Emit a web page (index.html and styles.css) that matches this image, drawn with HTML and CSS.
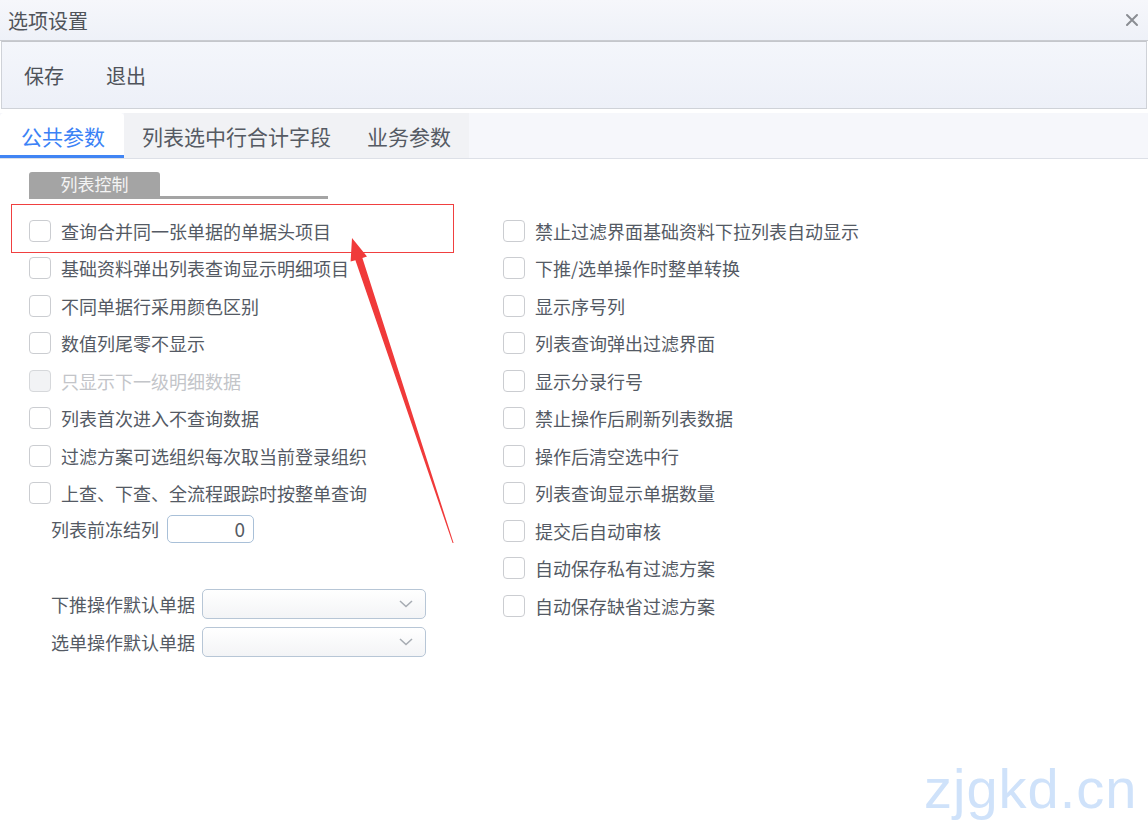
FILE: index.html
```html
<!DOCTYPE html>
<html lang="zh-CN">
<head>
  <meta charset="UTF-8">
  <title>选项设置</title>
  <link rel="stylesheet" href="styles.css">
</head>
<body>

  <div class="titlebar">
    <span class="title">选项设置</span>
    <svg class="close" width="14" height="14" viewBox="0 0 14 14">
      <path d="M2 2 L12 12 M12 2 L2 12" stroke="#8a8d93" stroke-width="2" stroke-linecap="round"/>
    </svg>
  </div>

  <div class="toolbar">
    <span class="tool-btn">保存</span>
    <span class="tool-btn">退出</span>
  </div>

  <div class="tabs">
    <div class="tab active">公共参数</div>
    <div class="tab">列表选中行合计字段</div>
    <div class="tab">业务参数</div>
  </div>

  <div class="panel">
    <div class="group-head"><span class="group-title">列表控制</span></div>

    <div class="columns">
      <div class="col col-left">
        <label class="row"><span class="box"></span>查询合并同一张单据的单据头项目</label>
        <label class="row"><span class="box"></span>基础资料弹出列表查询显示明细项目</label>
        <label class="row"><span class="box"></span>不同单据行采用颜色区别</label>
        <label class="row"><span class="box"></span>数值列尾零不显示</label>
        <label class="row disabled"><span class="box"></span>只显示下一级明细数据</label>
        <label class="row"><span class="box"></span>列表首次进入不查询数据</label>
        <label class="row"><span class="box"></span>过滤方案可选组织每次取当前登录组织</label>
        <label class="row"><span class="box"></span>上查、下查、全流程跟踪时按整单查询</label>

        <div class="field field-num">
          <span class="field-label">列表前冻结列</span>
          <span class="num-input">0</span>
        </div>

        <div class="field field-select">
          <span class="field-label">下推操作默认单据</span>
          <span class="select"><svg width="14" height="8" viewBox="0 0 14 8"><path d="M1 1 L7 6.5 L13 1" fill="none" stroke="#a7acb3" stroke-width="1.6"/></svg></span>
        </div>
        <div class="field field-select">
          <span class="field-label">选单操作默认单据</span>
          <span class="select"><svg width="14" height="8" viewBox="0 0 14 8"><path d="M1 1 L7 6.5 L13 1" fill="none" stroke="#a7acb3" stroke-width="1.6"/></svg></span>
        </div>
      </div>

      <div class="col col-right">
        <label class="row"><span class="box"></span>禁止过滤界面基础资料下拉列表自动显示</label>
        <label class="row"><span class="box"></span>下推/选单操作时整单转换</label>
        <label class="row"><span class="box"></span>显示序号列</label>
        <label class="row"><span class="box"></span>列表查询弹出过滤界面</label>
        <label class="row"><span class="box"></span>显示分录行号</label>
        <label class="row"><span class="box"></span>禁止操作后刷新列表数据</label>
        <label class="row"><span class="box"></span>操作后清空选中行</label>
        <label class="row"><span class="box"></span>列表查询显示单据数量</label>
        <label class="row"><span class="box"></span>提交后自动审核</label>
        <label class="row"><span class="box"></span>自动保存私有过滤方案</label>
        <label class="row"><span class="box"></span>自动保存缺省过滤方案</label>
      </div>
    </div>
  </div>

  <!-- 标注：红框和箭头 -->
  <div class="mark-box"></div>
  <svg class="mark-arrow" width="1148" height="827" viewBox="0 0 1148 827">
    <polygon points="352,238 367,256.5 362.4,258 453.6,543 452.6,543 355.4,260.2 350.6,261.6" fill="#f03a3a"/>
  </svg>

  <div class="watermark">zjgkd.cn</div>

</body>
</html>
```

FILE: styles.css
```css
body {
  margin: 0;
  font-family: "Noto Sans CJK SC", "Microsoft YaHei", sans-serif;
  color: #545a64;
  background-color: #ffffff;
  width: 1148px;
  height: 827px;
  overflow: hidden;
  position: relative;
}
.titlebar {
  height: 40px;
  padding: 0 9px 0 8px;
  display: flex;
  align-items: center;
  justify-content: space-between;
  background: linear-gradient(#f6f7fb, #eef1f8);
  border-bottom: 1px solid #c9cbd0;
}
.title {
  font-size: 20px;
  color: #50545a;
}
.toolbar {
  margin: 0 1px 0 1px;
  height: 66px;
  display: flex;
  align-items: center;
  gap: 42px;
  padding-left: 22px;
  background: linear-gradient(#f4f6fb, #edf0f8);
  border: 1px solid #cfd2d8;
  border-top-color: #c4c6cb;
}
.tool-btn {
  font-size: 20px;
  color: #4f535a;
}
.tabs {
  margin-top: 4px;
  height: 45px;
  display: flex;
  background-color: #f6f7fb;
  border-bottom: 1px solid #dde0e7;
}
.tab {
  padding: 0 18px;
  font-size: 21px;
  line-height: 46px;
  color: #555a63;
  background-color: #f1f2f5;
}
.tab.active {
  padding: 0 19px 0 21px;
  color: #3b82f6;
  background-color: #ffffff;
  border-radius: 4px 4px 0 0;
  box-shadow: inset 0 -3px 0 #4185f4;
}
.panel {
  padding: 13px 0 0 29px;
}
.group-head {
  width: 299px;
  border-bottom: 3px solid #a4a4a4;
  height: 24px;
}
.group-title {
  display: inline-block;
  width: 131px;
  height: 24px;
  line-height: 24px;
  text-align: center;
  font-size: 17px;
  color: #f4f4f4;
  background-color: #a4a4a4;
  border-radius: 3px 3px 0 0;
}
.columns {
  display: grid;
  grid-template-columns: 474px 1fr;
  margin-top: 13px;
}
.row {
  height: 37.5px;
  display: flex;
  align-items: center;
  font-size: 18px;
  color: #545a64;
}
.box {
  width: 20px;
  height: 20px;
  border: 1px solid #cbcdd1;
  border-radius: 4px;
  background-color: #ffffff;
  margin-right: 10px;
}
.row.disabled {
  color: #c3c5c9;
}
.row.disabled .box {
  background-color: #f2f3f5;
  border-color: #d6d8db;
}
.field {
  display: flex;
  align-items: center;
  padding-left: 22px;
  font-size: 18px;
  color: #545a64;
}
.field-label {
  margin-right: 8px;
}
.field-num {
  margin-top: 2px;
  height: 30px;
}
.num-input {
  width: 77px;
  height: 26px;
  line-height: 26px;
  border: 1px solid #a9c0d8;
  border-radius: 5px;
  text-align: right;
  padding-right: 8px;
  font-size: 19px;
  color: #555a63;
}
.field-select {
  height: 38px;
}
.field-num + .field-select {
  margin-top: 41px;
}
.field-select .field-label {
  margin-right: 7px;
}
.select {
  width: 224px;
  height: 30px;
  border: 1px solid #b7c6d6;
  border-radius: 5px;
  background: linear-gradient(#ffffff, #f3f4f6);
  display: flex;
  align-items: center;
  justify-content: flex-end;
  padding-right: 12px;
  box-sizing: border-box;
}
.mark-box {
  position: absolute;
  left: 11px;
  top: 204px;
  width: 441px;
  height: 47px;
  border: 1px solid #f04040;
}
.mark-arrow {
  position: absolute;
  left: 0;
  top: 0;
}
.watermark {
  position: absolute;
  left: 924px;
  top: 757px;
  font-family: "Liberation Sans", Arial, sans-serif;
  font-size: 56px;
  line-height: 64px;
  letter-spacing: 1px;
  color: #cfe2fa;
}
```
